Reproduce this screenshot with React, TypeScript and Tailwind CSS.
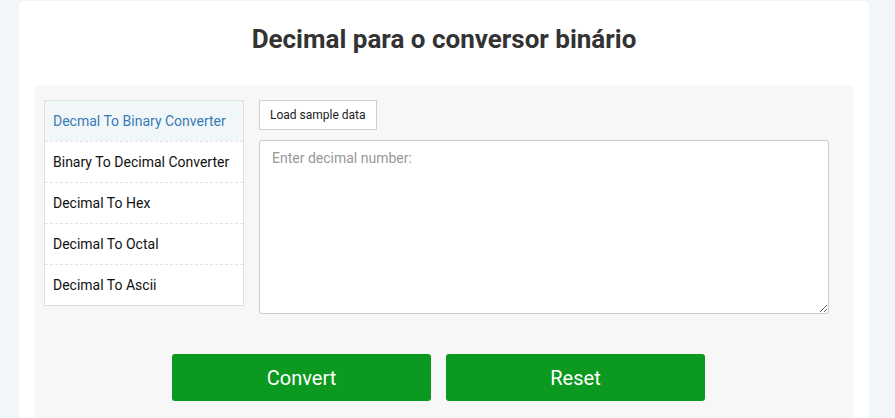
const items = [
  "Decmal To Binary Converter",
  "Binary To Decimal Converter",
  "Decimal To Hex",
  "Decimal To Octal",
  "Decimal To Ascii",
];

function App() {
  return (
    <div className="min-h-[418px] bg-[#f3f6f8] pl-[19px] pt-[1px] overflow-hidden font-['Roboto',sans-serif]">
      <div className="w-[850px] h-[430px] bg-white rounded-[5px] pl-[15px] pr-[15px]">
        <h1 className="text-[26px] font-bold text-[#333] text-center pt-[21px] leading-[34px]">
          Decimal para o conversor binário
        </h1>
        <div className="mt-[29px] bg-[#f7f7f7] rounded-[4px] h-[400px] pt-[15px] pl-[10px]">
          <div className="flex items-start">
            <ul className="w-[200px] shrink-0 bg-white border border-[#dedede]">
              {items.map((item, i) => (
                <li
                  key={item}
                  className={
                    i === 0
                      ? "h-[40px] flex items-center pl-[8px] text-[14px] text-[#3a7bb5] bg-[#f1f6f9]"
                      : "h-[41px] flex items-center pl-[8px] text-[14px] text-[#111] border-t border-dashed border-[#e3e3e3]"
                  }
                >
                  {item}
                </li>
              ))}
            </ul>
            <div className="ml-[15px] flex-1 pr-[26px]">
              <button className="h-[30px] px-[10px] bg-white border border-[#cfcfcf] text-[12px] text-[#222]">
                Load sample data
              </button>
              <textarea
                className="block mt-[10px] w-[570px] h-[174px] bg-white border border-[#cccccc] rounded-[3px] px-[12px] py-[7px] text-[14px] placeholder:text-[#999] outline-none resize-y"
                placeholder="Enter decimal number:"
              />
            </div>
          </div>
          <div className="flex gap-[15px] mt-[40px] pl-[128px]">
            <button className="w-[259px] h-[47px] bg-[#0c991f] rounded-[3px] text-white text-[20px]">
              Convert
            </button>
            <button className="w-[259px] h-[47px] bg-[#0c991f] rounded-[3px] text-white text-[20px]">
              Reset
            </button>
          </div>
        </div>
      </div>
    </div>
  );
}

export default App;
